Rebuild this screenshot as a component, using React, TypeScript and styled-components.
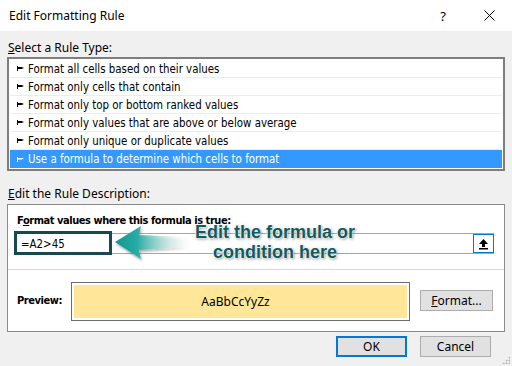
import React from "react";
import styled, { createGlobalStyle } from "styled-components";

const rules = [
  "Format all cells based on their values",
  "Format only cells that contain",
  "Format only top or bottom ranked values",
  "Format only values that are above or below average",
  "Format only unique or duplicate values",
  "Use a formula to determine which cells to format",
];

const GlobalStyle = createGlobalStyle`
  html, body {
    margin: 0;
    padding: 0;
    background: #f0f0f0;
  }
  body {
    font-family: "Noto Sans", "Liberation Sans", sans-serif;
    font-size: 12px;
    color: #000;
  }
`;

const Dialog = styled.div`
  position: relative;
  width: 512px;
  height: 366px;
  background: #f0f0f0;
  display: flex;
  flex-direction: column;
  overflow: hidden;
`;

const TitleBar = styled.div`
  height: 31px;
  background: #fff;
  display: flex;
  align-items: center;
  padding-left: 9px;
  font-size: 12px;
`;

const Title = styled.div`
  flex: 1;
`;

const TitleButton = styled.div<{ $w: number }>`
  width: ${({ $w }) => $w}px;
  display: flex;
  justify-content: center;
  align-items: center;
  font-size: 13px;
  color: #000;
`;

const Body = styled.div`
  padding: 9px 7px 0 7px;
  display: flex;
  flex-direction: column;
`;

const Label = styled.div`
  height: 16px;
  line-height: 16px;
  padding-left: 1px;
  font-size: 12px;
`;

const ListBox = styled.div`
  margin-top: 1px;
  border: 2px solid #7e7e7e;
  background: #fff;
  padding: 1px;
  display: flex;
  flex-direction: column;
`;

const Row = styled.div<{ $selected?: boolean }>`
  height: 17px;
  border-bottom: 1px solid ${({ $selected }) => ($selected ? "#fff" : "#ececec")};
  &:last-child {
    border-bottom: none;
    height: 18px;
  }
  display: flex;
  align-items: center;
  padding-left: 7px;
  gap: 4px;
  background: ${({ $selected }) => ($selected ? "#3399ff" : "#fff")};
  color: ${({ $selected }) => ($selected ? "#fff" : "#000")};
  font-family: "DejaVu Sans Condensed", "DejaVu Sans", sans-serif;
  font-size: 11.4px;
`;

const Pin = styled.span`
  position: relative;
  width: 7px;
  height: 5px;
  display: inline-block;
  &::before {
    content: "";
    position: absolute;
    left: 0;
    top: 0;
    width: 1px;
    height: 5px;
    background: currentColor;
  }
  &::after {
    content: "";
    position: absolute;
    left: 1px;
    top: 1px;
    width: 6px;
    height: 2px;
    background: currentColor;
    clip-path: polygon(0 0, 60% 0, 100% 50%, 60% 100%, 0 100%);
  }
`;

const SectionLabel = styled(Label)`
  margin-top: 15px;
`;

const Group = styled.div`
  margin-top: 2px;
  border: 1px solid #8a8a8a;
  background: #fff;
  display: flex;
  flex-direction: column;
  height: 128px;
  box-sizing: border-box;
`;

const Upper = styled.div`
  position: relative;
  padding: 8px 10px 15px 7px;
  border-bottom: 1px solid #d9d9d9;
  display: flex;
  flex-direction: column;
`;

const BoldLabel = styled.div`
  font-family: "DejaVu Sans Condensed", "DejaVu Sans", sans-serif;
  font-weight: bold;
  font-size: 11px;
  height: 15px;
  line-height: 15px;
  padding-left: 2px;
  letter-spacing: -0.45px;
`;

const FormulaRow = styled.div`
  margin-top: 5px;
  height: 21px;
  border: 1px solid #a5a5a5;
  box-sizing: border-box;
  display: flex;
  align-items: center;
  justify-content: space-between;
  padding-left: 5px;
`;

const FormulaText = styled.span`
  font-family: "DejaVu Sans Condensed", "DejaVu Sans", sans-serif;
  font-size: 11.4px;
`;

const CollapseButton = styled.div`
  width: 21px;
  height: 19px;
  box-sizing: border-box;
  border: 1px solid #0078d7;
  background: #fff;
  display: flex;
  align-items: center;
  justify-content: center;
  margin-right: -1px;
`;

const Highlight = styled.div`
  position: absolute;
  left: 6px;
  top: 26px;
  width: 98px;
  height: 24px;
  border: 3px solid #17494f;
  box-sizing: border-box;
`;

const Callout = styled.div`
  position: absolute;
  left: 106px;
  top: 18px;
  display: flex;
  align-items: center;
  gap: 6px;
`;

const ArrowWrap = styled.div`
  margin-top: 2px;
  display: flex;
`;

const CalloutText = styled.div`
  font-family: "Liberation Sans", Arial, sans-serif;
  font-weight: bold;
  font-size: 18px;
  line-height: 20px;
  color: #135a5c;
  text-align: center;
  text-shadow: 0 0 2px #fff, 0 0 2px #fff, 0 0 1px #fff, 1px 1px 3px rgba(0, 0, 0, 0.55);
  margin-top: -3px;
  margin-left: -1px;
`;

const Lower = styled.div`
  flex: 1;
  display: flex;
  align-items: center;
  padding: 0 10px 0 9px;
`;

const PreviewLabel = styled(BoldLabel)`
  width: 54px;
  padding-left: 0;
`;

const PreviewBox = styled.div`
  width: 339px;
  height: 39px;
  box-sizing: border-box;
  border: 1px solid #6d6d6d;
  padding: 2px;
  margin-top: 1px;
`;

const PreviewFill = styled.div`
  height: 100%;
  background: #ffe699;
  display: flex;
  align-items: center;
  justify-content: center;
  font-size: 12px;
  padding-right: 10px;
`;

const Button = styled.button<{ $default?: boolean }>`
  width: 71px;
  height: 21px;
  box-sizing: border-box;
  background: #e1e1e1;
  border: ${({ $default }) => ($default ? "2px solid #0078d7" : "1px solid #adadad")};
  font-family: "Noto Sans", "Liberation Sans", sans-serif;
  font-size: 12px;
  color: #000;
  padding: 0;
  display: flex;
  align-items: center;
  justify-content: center;
`;

const FormatButton = styled(Button)`
  width: 73px;
  margin-left: 10px;
  margin-top: -1px;
`;

const Footer = styled.div`
  display: flex;
  justify-content: flex-end;
  gap: 13px;
  padding: 4px 14px 0 0;
`;

const Grip = styled.div`
  position: absolute;
  right: 2px;
  bottom: 2px;
  width: 8px;
  height: 8px;
  background-image: radial-gradient(#b5b5b5 45%, transparent 50%);
  background-size: 3px 3px;
  clip-path: polygon(100% 0, 100% 100%, 0 100%);
`;

const U = styled.span`
  text-decoration: underline;
  text-underline-offset: 1px;
`;

const Arrow = () => (
  <svg width="76" height="38" viewBox="0 0 76 38">
    <defs>
      <linearGradient id="ag" x1="0" x2="1" y1="0" y2="0">
        <stop offset="0" stopColor="#119690" />
        <stop offset="0.3" stopColor="#27aca4" />
        <stop offset="0.65" stopColor="#9fd9d4" stopOpacity="0.6" />
        <stop offset="1" stopColor="#ffffff" stopOpacity="0" />
      </linearGradient>
      <filter id="as" x="-20%" y="-20%" width="140%" height="160%">
        <feDropShadow dx="1" dy="2" stdDeviation="1.3" floodColor="#000" floodOpacity="0.35" />
      </filter>
    </defs>
    <path d="M1 17 L27 1 L25 10 L75 12 L75 22 L25 25 L27 34 Z" fill="url(#ag)" filter="url(#as)" />
  </svg>
);

const UpIcon = () => (
  <svg width="11" height="12" viewBox="0 0 11 12">
    <path d="M5.5 1 L10 6 L7 6 L7 9 L4 9 L4 6 L1 6 Z" fill="#000" />
    <rect x="1" y="10" width="9" height="1.5" fill="#000" />
  </svg>
);

export default function App() {
  return (
    <Dialog>
      <GlobalStyle />
      <TitleBar>
        <Title>Edit Formatting Rule</Title>
        <TitleButton $w={46}>?</TitleButton>
        <TitleButton $w={46}>
          <svg width="11" height="11" viewBox="0 0 11 11">
            <path d="M0.5 0.5 L10.5 10.5 M10.5 0.5 L0.5 10.5" stroke="#000" strokeWidth="1" />
          </svg>
        </TitleButton>
      </TitleBar>
      <Body>
        <Label>
          <U>S</U>elect a Rule Type:
        </Label>
        <ListBox>
          {rules.map((r, i) => (
            <Row key={r} $selected={i === rules.length - 1}>
              <Pin />
              {r}
            </Row>
          ))}
        </ListBox>
        <SectionLabel>
          <U>E</U>dit the Rule Description:
        </SectionLabel>
        <Group>
          <Upper>
            <BoldLabel>
              F<U>o</U>rmat values where this formula is true:
            </BoldLabel>
            <FormulaRow>
              <FormulaText>=A2&gt;45</FormulaText>
              <CollapseButton>
                <UpIcon />
              </CollapseButton>
            </FormulaRow>
            <Highlight />
            <Callout>
              <ArrowWrap>
                <Arrow />
              </ArrowWrap>
              <CalloutText>
                Edit the formula or
                <br />
                condition here
              </CalloutText>
            </Callout>
          </Upper>
          <Lower>
            <PreviewLabel>Preview:</PreviewLabel>
            <PreviewBox>
              <PreviewFill>AaBbCcYyZz</PreviewFill>
            </PreviewBox>
            <FormatButton>
              <U>F</U>ormat...
            </FormatButton>
          </Lower>
        </Group>
        <Footer>
          <Button $default>OK</Button>
          <Button>Cancel</Button>
        </Footer>
      </Body>
      <Grip />
    </Dialog>
  );
}
